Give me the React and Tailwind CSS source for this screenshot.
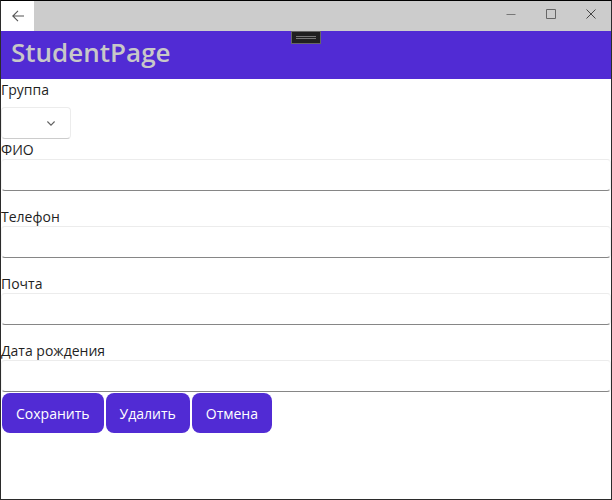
import React from "react";

const fields = [
  { id: "full-name", label: "ФИО", type: "text" },
  { id: "phone", label: "Телефон", type: "tel" },
  { id: "email", label: "Почта", type: "email" },
  { id: "birth-date", label: "Дата рождения", type: "text" },
];

const actions = ["Сохранить", "Удалить", "Отмена"];

function TitleBar() {
  return (
    <div className="flex h-[30px] items-stretch justify-between bg-[#cccccc] text-[#666666]">
      <button type="button" aria-label="Назад" className="flex w-[33px] items-center justify-center bg-white">
        <svg width="12" height="12" viewBox="0 0 12 12" fill="none" stroke="#555555" strokeWidth="1.1">
          <path d="M12 6H0.8M6 0.8L0.8 6L6 11.2" />
        </svg>
      </button>
      <div className="flex">
        <button type="button" aria-label="Свернуть" className="flex w-10 items-center justify-center pb-1">
          <svg width="10" height="10" viewBox="0 0 10 10" fill="none" stroke="#777777">
            <path d="M0.5 5.5H9.5" />
          </svg>
        </button>
        <button type="button" aria-label="Развернуть" className="flex w-10 items-center justify-center pb-1">
          <svg width="10" height="10" viewBox="0 0 10 10" fill="none" stroke="currentColor">
            <path d="M0.5 0.5H9.5V9.5H0.5Z" />
          </svg>
        </button>
        <button type="button" aria-label="Закрыть" className="flex w-10 items-center justify-center pb-1">
          <svg width="10" height="10" viewBox="0 0 10 10" fill="none" stroke="#444444">
            <path d="M0.5 0.5L9.5 9.5M9.5 0.5L0.5 9.5" />
          </svg>
        </button>
      </div>
    </div>
  );
}

function Header() {
  return (
    <header className="relative flex h-12 items-center bg-[#512bd4] px-[10px] pb-1.5">
      <h1 className="text-[26px] leading-9 font-semibold text-[#c8c8c8]">StudentPage</h1>
      <button
        type="button"
        aria-label="Панель отладки"
        className="absolute top-0 left-1/2 flex h-[13px] w-[30px] -translate-x-1/2 flex-col items-center justify-center gap-px border border-[#666666] bg-[#202020]"
      >
        <span className="h-px w-5 bg-[#777777]" />
        <span className="h-px w-5 bg-[#777777]" />
      </button>
    </header>
  );
}

function GroupPicker() {
  return (
    <div className="flex flex-col items-start gap-2">
      <label htmlFor="group">Группа</label>
      <div className="relative w-[70px]">
        <select
          id="group"
          defaultValue=""
          className="block h-8 w-full appearance-none rounded-[4px] border border-[#ececec] border-b-[#cccccc] bg-white px-3 pr-7 outline-none"
        >
          <option value=""></option>
        </select>
        <svg
          className="pointer-events-none absolute top-[14px] right-4"
          width="8"
          height="5"
          viewBox="0 0 8 5"
          fill="none"
          stroke="#606060"
          strokeWidth="1.1"
        >
          <path d="M0.4 0.5L4 4.1L7.6 0.5" />
        </svg>
      </div>
    </div>
  );
}

function TextField({ id, label, type }) {
  return (
    <div className="flex flex-col">
      <label htmlFor={id}>{label}</label>
      <input
        id={id}
        type={type}
        className="h-8 w-full rounded-[4px] border border-x-[#f3f3f3] border-t-[#ececec] border-b-[#868686] bg-white px-3 outline-none"
      />
    </div>
  );
}

export default function App() {
  return (
    <div className="flex min-h-screen flex-col border border-[#2b2b2b] border-t-black bg-white font-['Open_Sans','Noto_Sans',sans-serif] text-[14px] leading-[19px] text-[#1f1f1f]">
      <TitleBar />
      <Header />
      <form className="flex flex-col gap-px pt-px" onSubmit={(event) => event.preventDefault()}>
        <GroupPicker />
        <div className="flex flex-col gap-4">
          {fields.map((field) => (
            <TextField key={field.id} {...field} />
          ))}
        </div>
        <div className="flex flex-wrap gap-[2px] px-px">
          {actions.map((action) => (
            <button key={action} type="button" className="h-10 rounded-lg bg-[#512bd4] px-[14px] text-white">
              {action}
            </button>
          ))}
        </div>
      </form>
    </div>
  );
}
